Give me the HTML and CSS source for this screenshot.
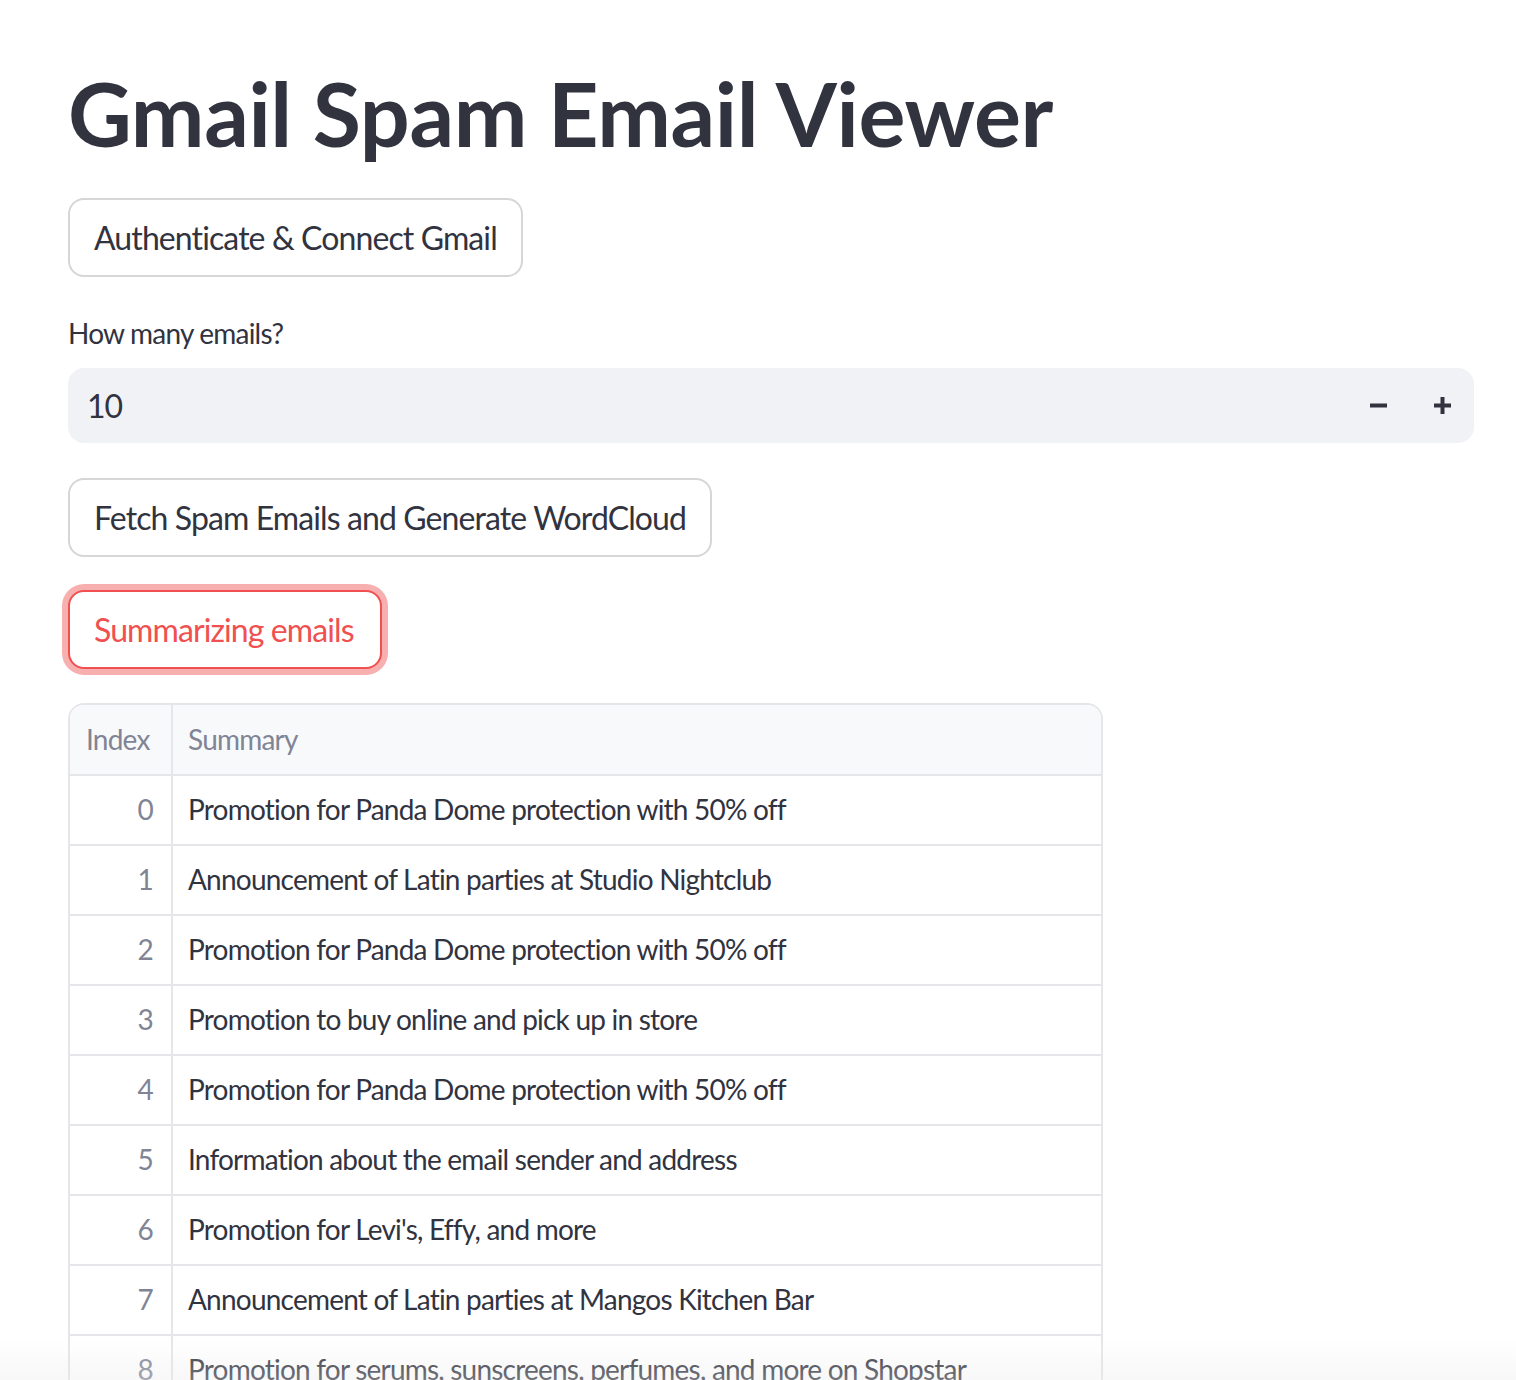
FILE: index.html
```html
<!DOCTYPE html>
<html lang="en">
<head>
<meta charset="utf-8">
<title>Gmail Spam Email Viewer</title>
<link rel="stylesheet" href="styles.css">
</head>
<body>
<main class="app">
  <h1 class="title">Gmail Spam Email Viewer</h1>
  <button class="btn btn-auth" type="button">Authenticate &amp; Connect Gmail</button>
  <div class="field">
    <label class="field-label" for="count">How many emails?</label>
    <div class="num">
      <input id="count" class="num-input" type="text" value="10">
      <button class="step" type="button" aria-label="decrement">
        <svg width="17" height="17" viewBox="0 0 17 17"><rect x="0" y="6.5" width="17" height="4" fill="#31333f"/></svg>
      </button>
      <button class="step" type="button" aria-label="increment">
        <svg width="17" height="17" viewBox="0 0 17 17"><rect x="0" y="6.5" width="17" height="4" fill="#31333f"/><rect x="6.5" y="0" width="4" height="17" fill="#31333f"/></svg>
      </button>
    </div>
  </div>
  <button class="btn btn-fetch" type="button">Fetch Spam Emails and Generate WordCloud</button>
  <button class="btn btn-active" type="button">Summarizing emails</button>
  <div class="grid-wrap">
    <table class="grid">
      <thead>
        <tr><th class="col-idx">Index</th><th class="col-sum">Summary</th></tr>
      </thead>
      <tbody>
        <tr><td class="col-idx">0</td><td class="col-sum">Promotion for Panda Dome protection with 50% off</td></tr>
        <tr><td class="col-idx">1</td><td class="col-sum">Announcement of Latin parties at Studio Nightclub</td></tr>
        <tr><td class="col-idx">2</td><td class="col-sum">Promotion for Panda Dome protection with 50% off</td></tr>
        <tr><td class="col-idx">3</td><td class="col-sum">Promotion to buy online and pick up in store</td></tr>
        <tr><td class="col-idx">4</td><td class="col-sum">Promotion for Panda Dome protection with 50% off</td></tr>
        <tr><td class="col-idx">5</td><td class="col-sum">Information about the email sender and address</td></tr>
        <tr><td class="col-idx">6</td><td class="col-sum">Promotion for Levi's, Effy, and more</td></tr>
        <tr><td class="col-idx">7</td><td class="col-sum">Announcement of Latin parties at Mangos Kitchen Bar</td></tr>
        <tr><td class="col-idx">8</td><td class="col-sum">Promotion for serums, sunscreens, perfumes, and more on Shopstar</td></tr>
      </tbody>
    </table>
  </div>
</main>
<div class="fade"></div>
</body>
</html>
```
FILE: styles.css
```css
* { box-sizing: border-box; }
html, body { margin: 0; padding: 0; background: #fff; }
body {
  font-family: "Lato", "Noto Sans", sans-serif;
  color: #31333f;
  height: 1380px;
  overflow: hidden;
}
.app {
  width: 1406px;
  margin-left: 68px;
  padding-top: 60px;
  display: flex;
  flex-direction: column;
  align-items: flex-start;
}
.title {
  margin: 0;
  font-size: 88px;
  line-height: 106px;
  font-weight: 700;
  color: #31333f;
  letter-spacing: -0.4px;
}
.btn {
  font-family: inherit;
  font-size: 32px;
  letter-spacing: -0.028em;
  color: #31333f;
  background: #fff;
  border: 2px solid #d6d6d9;
  border-radius: 16px;
  height: 79px;
  padding: 0 24px;
  line-height: 1;
  cursor: pointer;
}
.btn-auth { margin-top: 32px; }
.field { width: 100%; margin-top: 32px; }
.field-label {
  display: block;
  font-size: 28px;
  letter-spacing: -0.028em;
  line-height: 48px;
  height: 48px;
  margin-bottom: 11px;
}
.num {
  display: flex;
  align-items: center;
  height: 75px;
  background: #f0f2f6;
  border-radius: 16px;
}
.num-input {
  flex: 1;
  min-width: 0;
  height: 100%;
  border: none;
  background: transparent;
  font-family: inherit;
  font-size: 32px;
  letter-spacing: -0.03em;
  color: #31333f;
  padding: 0 0 0 19px;
  outline: none;
}
.step {
  width: 64px;
  height: 100%;
  border: none;
  background: transparent;
  display: flex;
  align-items: center;
  justify-content: center;
  padding: 0;
}
.btn-fetch { margin-top: 35px; }
.btn-active {
  margin-top: 33px;
  padding: 0 26px 0 24px;
  color: #f0504f;
  border-color: #f0504f;
  box-shadow: 0 0 0 6px rgba(240, 95, 95, 0.5);
}
.grid-wrap {
  margin-top: 34px;
  width: 1035px;
  border: 2px solid #e6e6ea;
  border-radius: 16px 16px 0 0;
  overflow: hidden;
}
.grid {
  width: 100%;
  border-collapse: collapse;
  font-size: 28px;
  letter-spacing: -0.028em;
}
.grid th, .grid td {
  height: 70px;
  padding: 0 16px 2px;
  border-bottom: 2px solid #e6e6ea;
  font-weight: 400;
  white-space: nowrap;
}
.grid th {
  background: #f8f9fb;
  color: #808495;
  text-align: left;
}
.grid .col-idx {
  width: 102px;
  border-right: 2px solid #e6e6ea;
}
.grid td.col-idx {
  text-align: right;
  padding-right: 18px;
  color: #808495;
}
.grid td.col-sum { color: #31333f; padding-left: 15px; }
.grid th.col-sum { padding-left: 15px; }
.fade {
  position: fixed;
  left: 0;
  right: 0;
  bottom: 0;
  height: 44px;
  background: linear-gradient(to bottom, rgba(245,245,245,0), rgba(235,235,235,0.35));
  pointer-events: none;
}
```
